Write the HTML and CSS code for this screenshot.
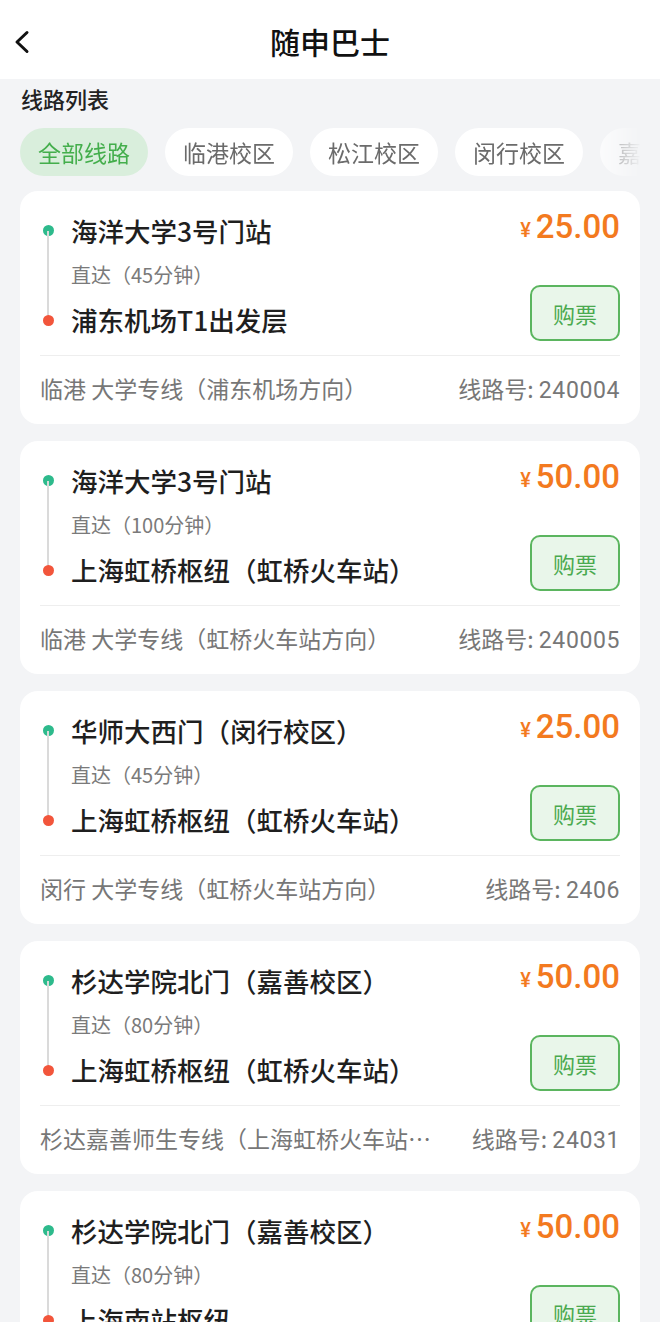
FILE: index.html
```html
<!DOCTYPE html>
<html lang="zh-CN">
<head>
<meta charset="utf-8">
<title>随申巴士</title>
<link rel="stylesheet" href="styles.css">
</head>
<body>
<header class="topbar">
  <svg class="back" width="20" height="24" viewBox="0 0 20 24"><polyline points="14,2.5 4,12 14,21.5" fill="none" stroke="#111" stroke-width="3" stroke-linecap="round" stroke-linejoin="round"/></svg>
  <h1 class="title">随申巴士</h1>
</header>
<main class="page">
  <h2 class="section-title">线路列表</h2>
  <div class="tabs">
    <span class="tab active">全部线路</span>
    <span class="tab">临港校区</span>
    <span class="tab">松江校区</span>
    <span class="tab">闵行校区</span>
    <span class="tab">嘉善校区</span>
  </div>

  <div class="cards">
    <section class="card">
      <div class="card-main">
        <div class="route">
          <div class="station">海洋大学3号门站</div>
          <div class="duration">直达（45分钟）</div>
          <div class="station">浦东机场T1出发层</div>
          <i class="dot start"></i><i class="track"></i><i class="dot end"></i>
        </div>
        <div class="side">
          <div class="price"><span class="yen">¥</span>25.00</div>
          <button class="buy">购票</button>
        </div>
      </div>
      <div class="card-foot">
        <span class="line-name">临港 大学专线（浦东机场方向）</span>
        <span class="line-no">线路号: <span class="num">240004</span></span>
      </div>
    </section>

    <section class="card">
      <div class="card-main">
        <div class="route">
          <div class="station">海洋大学3号门站</div>
          <div class="duration">直达（100分钟）</div>
          <div class="station">上海虹桥枢纽（虹桥火车站）</div>
          <i class="dot start"></i><i class="track"></i><i class="dot end"></i>
        </div>
        <div class="side">
          <div class="price"><span class="yen">¥</span>50.00</div>
          <button class="buy">购票</button>
        </div>
      </div>
      <div class="card-foot">
        <span class="line-name">临港 大学专线（虹桥火车站方向）</span>
        <span class="line-no">线路号: <span class="num">240005</span></span>
      </div>
    </section>

    <section class="card">
      <div class="card-main">
        <div class="route">
          <div class="station">华师大西门（闵行校区）</div>
          <div class="duration">直达（45分钟）</div>
          <div class="station">上海虹桥枢纽（虹桥火车站）</div>
          <i class="dot start"></i><i class="track"></i><i class="dot end"></i>
        </div>
        <div class="side">
          <div class="price"><span class="yen">¥</span>25.00</div>
          <button class="buy">购票</button>
        </div>
      </div>
      <div class="card-foot">
        <span class="line-name">闵行 大学专线（虹桥火车站方向）</span>
        <span class="line-no">线路号: <span class="num">2406</span></span>
      </div>
    </section>

    <section class="card">
      <div class="card-main">
        <div class="route">
          <div class="station">杉达学院北门（嘉善校区）</div>
          <div class="duration">直达（80分钟）</div>
          <div class="station">上海虹桥枢纽（虹桥火车站）</div>
          <i class="dot start"></i><i class="track"></i><i class="dot end"></i>
        </div>
        <div class="side">
          <div class="price"><span class="yen">¥</span>50.00</div>
          <button class="buy">购票</button>
        </div>
      </div>
      <div class="card-foot">
        <span class="line-name">杉达嘉善师生专线（上海虹桥火车站方向）</span>
        <span class="line-no">线路号: <span class="num">24031</span></span>
      </div>
    </section>

    <section class="card">
      <div class="card-main">
        <div class="route">
          <div class="station">杉达学院北门（嘉善校区）</div>
          <div class="duration">直达（80分钟）</div>
          <div class="station">上海南站枢纽</div>
          <i class="dot start"></i><i class="track"></i><i class="dot end"></i>
        </div>
        <div class="side">
          <div class="price"><span class="yen">¥</span>50.00</div>
          <button class="buy">购票</button>
        </div>
      </div>
      <div class="card-foot">
        <span class="line-name">杉达嘉善师生专线（上海南站方向）</span>
        <span class="line-no">线路号: <span class="num">24032</span></span>
      </div>
    </section>
  </div>
</main>
</body>
</html>
```

FILE: styles.css
```css
* { box-sizing: border-box; margin: 0; padding: 0; }
html, body { background: #f3f4f6; }
body {
  font-family: "Noto Sans CJK SC", "Noto Sans", sans-serif;
  color: #222;
  width: 660px;
  overflow-x: hidden;
  text-spacing-trim: space-all;
}
.topbar {
  height: 79px;
  background: #fff;
  display: flex;
  align-items: center;
  justify-content: center;
  position: relative;
}
.back {
  position: absolute;
  left: 13px;
  top: 30px;
}
.title {
  font-size: 30px;
  font-weight: 500;
  color: #111;
  line-height: 40px;
  margin-top: 2px;
}
.page { padding: 0 20px 40px; }
.section-title {
  font-size: 22px;
  font-weight: 500;
  color: #222;
  line-height: 30px;
  margin-top: 4px;
  padding-left: 1px;
}
.tabs {
  display: flex;
  gap: 17px;
  margin-top: 15px;
  overflow: hidden;
  margin-right: -20px;
  -webkit-mask-image: linear-gradient(to right, #000 560px, rgba(0,0,0,0.35) 600px, transparent 622px);
  mask-image: linear-gradient(to right, #000 560px, rgba(0,0,0,0.35) 600px, transparent 622px);
}
.tab {
  flex: none;
  height: 48px;
  line-height: 48px;
  padding: 0 18px;
  border-radius: 24px;
  background: #fff;
  color: #6b6b6b;
  font-size: 23px;
}
.tab.active {
  background: #d9eedc;
  color: #44ae4c;
}
.cards {
  margin-top: 15px;
  display: flex;
  flex-direction: column;
  gap: 17px;
}
.card {
  background: #fff;
  border-radius: 18px;
  padding: 20px 20px 20px;
}
.card-main {
  display: flex;
  justify-content: space-between;
  height: 130px;
}
.route {
  position: relative;
  padding-left: 31px;
}
.station {
  font-size: 26.5px;
  font-weight: 500;
  line-height: 40px;
  height: 40px;
  color: #1f1f1f;
  white-space: nowrap;
}
.duration {
  font-size: 20px;
  line-height: 48px;
  height: 49px;
  color: #7a7a7a;
}
.dot {
  position: absolute;
  left: 2.5px;
  width: 11px;
  height: 11px;
  border-radius: 50%;
}
.dot.start { top: 13.5px; background: #2dba8c; }
.dot.end { top: 103.5px; background: #f2553b; }
.track {
  position: absolute;
  left: 7px;
  top: 20px;
  width: 2px;
  height: 88px;
  background: #dadada;
}
.side {
  display: flex;
  flex-direction: column;
  align-items: flex-end;
}
.price {
  font-family: "Roboto", "Liberation Sans", sans-serif;
  font-size: 33px;
  font-weight: 500;
  line-height: 32px;
  height: 30px;
  color: #f37a1f;
  white-space: nowrap;
}
.yen {
  font-size: 20px;
  margin-right: 5px;
  vertical-align: 1px;
}
.buy {
  margin-top: 44px;
  width: 90px;
  height: 56px;
  border: 2px solid #5bb55f;
  border-radius: 10px;
  background: #e9f6ea;
  color: #4aa94f;
  font-family: "Noto Sans CJK SC", sans-serif;
  font-size: 22px;
}
.card-foot {
  margin-top: 14px;
  border-top: 1px solid #eeeeee;
  padding-top: 16px;
  display: flex;
  justify-content: space-between;
  gap: 30px;
  font-size: 23px;
  line-height: 32px;
  height: 49px;
  color: #777;
}
.line-name {
  flex: 1;
  min-width: 0;
  white-space: nowrap;
  overflow: hidden;
  text-overflow: ellipsis;
}
.line-no { flex: none; white-space: nowrap; }
.num {
  font-family: "Roboto", "Noto Sans CJK SC", sans-serif;
  font-size: 23px;
  letter-spacing: 0.6px;
}
```
